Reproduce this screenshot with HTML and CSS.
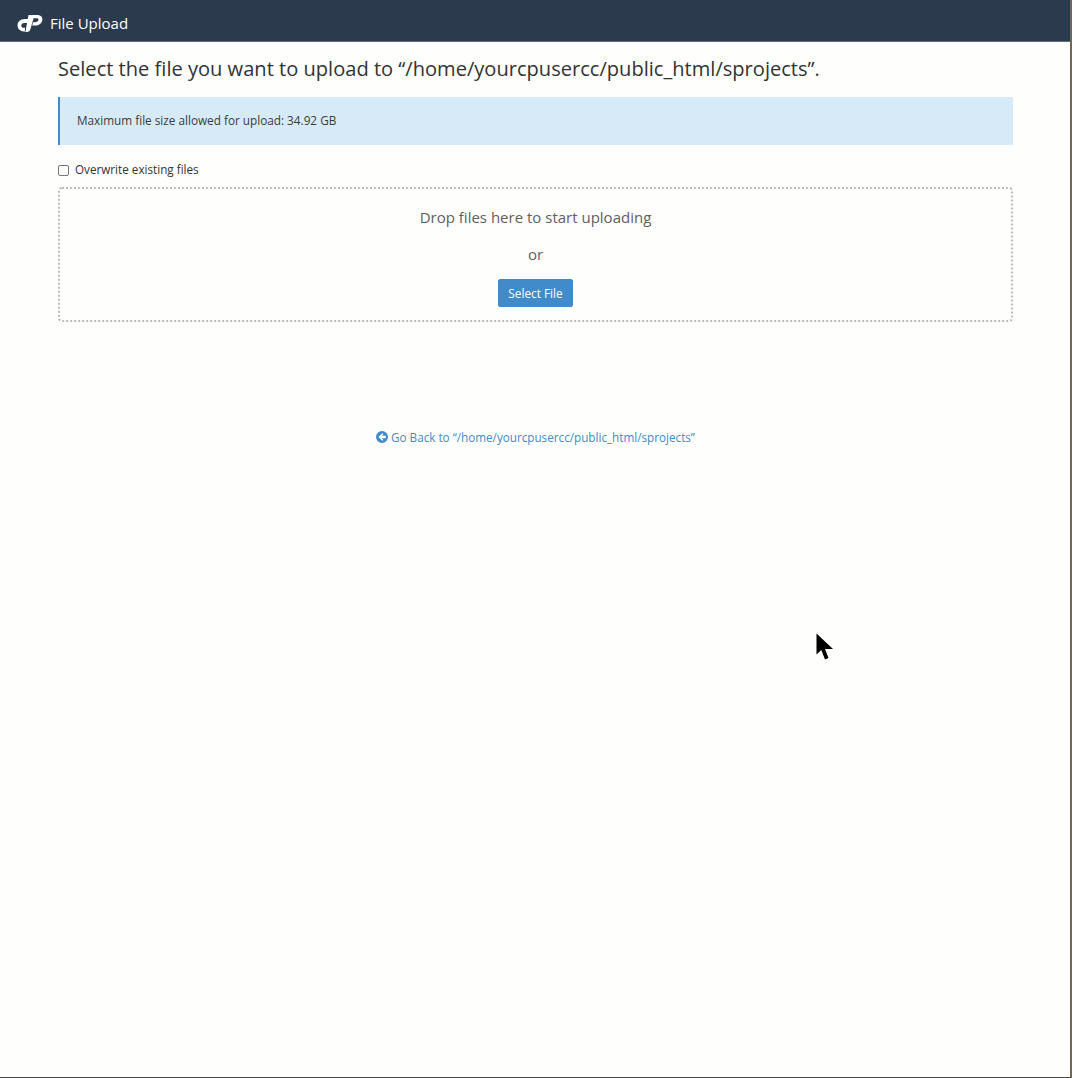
FILE: index.html
```html
<!DOCTYPE html>
<html lang="en">
<head>
<meta charset="utf-8">
<title>File Upload</title>
<link rel="stylesheet" href="styles.css">
</head>
<body>
<div class="window">
  <header class="topbar">
    <svg class="logo" viewBox="0 0 26 17" width="26" height="17" aria-hidden="true">
      <path fill="none" stroke="#fff" stroke-width="3.8" d="M11.5 6H7.5C4.4 6 2.4 7.8 2.4 10.4 2.4 12.9 4.2 14.6 7 14.6H8"/>
      <path fill="#fff" d="M11.5 0H20C24 0 25.9 2.4 25.3 5.2 24.6 8.5 21.5 10.6 18.2 10.6H15.2L16.1 7.3H18C20 7.3 21.1 6.4 21.4 5.1 21.6 3.9 20.9 3.3 19.5 3.3H16.6L13.3 14.6C12.8 16.2 11.6 17 10 17H8.4Z"/>
    </svg>
    <span class="topbar-title">File Upload</span>
  </header>
  <main class="content">
    <h1 class="heading">Select the file you want to upload to “/home/yourcpusercc/public_html/sprojects”.</h1>
    <div class="notice">Maximum file size allowed for upload: 34.92 GB</div>
    <label class="overwrite"><input class="overwrite-box" type="checkbox"><span>Overwrite existing files</span></label>
    <section class="dropzone">
      <p class="drop-text">Drop files here to start uploading</p>
      <p class="drop-or">or</p>
      <button class="select-btn" type="button">Select File</button>
    </section>
    <p class="back">
      <a class="back-link" href="#">
        <svg class="back-icon" viewBox="0 0 12 12" width="12" height="12" aria-hidden="true">
          <path fill="#428bca" fill-rule="evenodd" d="M6 0a6 6 0 1 1 0 12A6 6 0 0 1 6 0ZM6.3 2.2 2.5 6l3.8 3.8 1.1-1.1L5.8 7.2H9.8V4.8H5.8l1.6-1.5Z"/>
        </svg>Go Back to “/home/yourcpusercc/public_html/sprojects”</a>
    </p>
  </main>
  <svg class="cursor" viewBox="0 0 18 28" width="18" height="28" aria-hidden="true">
    <path fill="#000" d="M0.5 0.5V21.5L5.3 17 9 26.5 12.5 25 9 16H17Z"/>
  </svg>
</div>
</body>
</html>
```
FILE: styles.css
```css
* { box-sizing: border-box; }
html, body { margin: 0; padding: 0; height: 100%; }
body { background: #fefefc; font-family: "Open Sans", "Liberation Sans", sans-serif; color: #333; }
.window {
  position: relative;
  height: 1078px;
  width: 1072px;
  overflow: hidden;
  border-right: 2px solid #6f6a58;
  border-bottom: 1px solid #4a4a4a;
}
.topbar {
  height: 42px;
  background: #2b3a4c;
  border-bottom: 1px solid #5e6a76;
  display: flex;
  align-items: center;
  padding-left: 17px;
  gap: 7px;
}
.logo { display: block; margin-top: 6px; }
.topbar-title { color: #fff; font-size: 15px; line-height: 20px; margin-top: 5px; }
.content { padding: 0 58px; width: 1071px; }
.heading { margin: 14px 0 0; font-size: 20.08px; line-height: 26px; font-weight: 400; color: #333; white-space: nowrap; }
.notice {
  margin-top: 15px;
  height: 48px;
  background: #d6ebf7;
  border-left: 2px solid #428bca;
  padding: 0 0 2px 17px;
  display: flex;
  align-items: center;
  font-size: 11.75px;
  color: #3c3c3c;
}
.overwrite { display: flex; align-items: center; margin-top: 15px; height: 18px; font-size: 11.7px; color: #333; }
.overwrite-box {
  appearance: none;
  margin: 2px 6px 0 0;
  width: 11px;
  height: 11px;
  flex: none;
  background: #fff;
  border: 1px solid #777;
  border-radius: 2px;
}
.dropzone {
  margin-top: 9px;
  height: 135px;
  border: 2px dotted #bdbdbd;
  border-radius: 4px;
  display: flex;
  flex-direction: column;
  align-items: center;
  padding-top: 18px;
}
.drop-text { margin: 0; font-size: 15px; line-height: 20px; color: #5f5f5f; }
.drop-or { margin: 17px 0 0; font-size: 15px; line-height: 20px; color: #5f5f5f; }
.select-btn {
  margin-top: 15px;
  width: 75px;
  height: 28px;
  padding: 0;
  border: 1px solid #428bca;
  border-radius: 2px;
  background: #428bca;
  color: #fff;
  font-family: inherit;
  font-size: 11.8px;
}
.back { margin: 106px 0 0; text-align: center; font-size: 11.7px; line-height: 18px; }
.back-link { color: #428bca; text-decoration: none; }
.back-icon { vertical-align: -1px; margin-right: 3px; }
.cursor { position: absolute; left: 816px; top: 633px; }
```
